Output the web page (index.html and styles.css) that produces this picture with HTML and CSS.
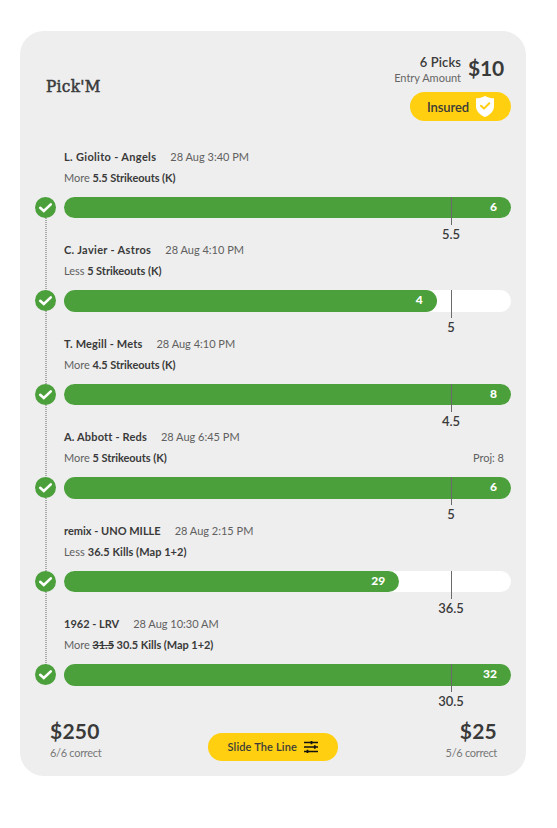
FILE: index.html
```html
<!DOCTYPE html>
<html lang="en">
<head>
<title>Pick'M</title>
<meta charset="utf-8">
<link rel="stylesheet" href="styles.css">
</head>
<body>
  <div class="card">
    <div class="header">
      <h1 class="title">Pick'M</h1>
      <div class="entry">
        <div class="entry-top">
          <div class="entry-text">
            <div class="picks">6 Picks</div>
            <div class="entry-label">Entry Amount</div>
          </div>
          <div class="amount">$10</div>
        </div>
        <div class="insured">
          <span>Insured</span>
          <svg width="18" height="21" viewBox="0 0 18 21">
            <path fill="#fff" d="M9 0C12 1.7 15 2.3 18 2.3V10C18 15.5 14 19 9 21C4 19 0 15.5 0 10V2.3C3 2.3 6 1.7 9 0Z"/>
            <path fill="none" stroke="#ffcf10" stroke-width="2" stroke-linecap="round" stroke-linejoin="round" d="M5 9.8L8 12.6L13.3 7.2"/>
          </svg>
        </div>
      </div>
    </div>

    <div class="picks-list">
      <div class="pick">
        <div class="check"><svg width="21" height="21" viewBox="0 0 21 21"><path d="M5.2 10.8L8.8 14L15.8 7.4"/></svg></div>
        <div class="info"><b class="name wide">L. Giolito - Angels</b><span class="date">28 Aug 3:40 PM</span></div>
        <div class="detail"><span>More <b>5.5 Strikeouts (K)</b></span></div>
        <div class="bar"><div class="fill" style="width:100%">6</div><div class="marker"><span>5.5</span></div></div>
      </div>
      <div class="pick">
        <div class="check"><svg width="21" height="21" viewBox="0 0 21 21"><path d="M5.2 10.8L8.8 14L15.8 7.4"/></svg></div>
        <div class="info"><b class="name wide">C. Javier - Astros</b><span class="date">28 Aug 4:10 PM</span></div>
        <div class="detail"><span>Less <b>5 Strikeouts (K)</b></span></div>
        <div class="bar"><div class="fill" style="width:83.4%">4</div><div class="marker"><span>5</span></div></div>
      </div>
      <div class="pick">
        <div class="check"><svg width="21" height="21" viewBox="0 0 21 21"><path d="M5.2 10.8L8.8 14L15.8 7.4"/></svg></div>
        <div class="info"><b class="name">T. Megill - Mets</b><span class="date">28 Aug 4:10 PM</span></div>
        <div class="detail"><span>More <b>4.5 Strikeouts (K)</b></span></div>
        <div class="bar"><div class="fill" style="width:100%">8</div><div class="marker"><span>4.5</span></div></div>
      </div>
      <div class="pick">
        <div class="check"><svg width="21" height="21" viewBox="0 0 21 21"><path d="M5.2 10.8L8.8 14L15.8 7.4"/></svg></div>
        <div class="info"><b class="name">A. Abbott - Reds</b><span class="date">28 Aug 6:45 PM</span></div>
        <div class="detail"><span>More <b>5 Strikeouts (K)</b></span><span class="proj">Proj: 8</span></div>
        <div class="bar"><div class="fill" style="width:100%">6</div><div class="marker"><span>5</span></div></div>
      </div>
      <div class="pick">
        <div class="check"><svg width="21" height="21" viewBox="0 0 21 21"><path d="M5.2 10.8L8.8 14L15.8 7.4"/></svg></div>
        <div class="info"><b class="name tight">remix - UNO MILLE</b><span class="date">28 Aug 2:15 PM</span></div>
        <div class="detail kills"><span>Less <b>36.5 Kills (Map 1+2)</b></span></div>
        <div class="bar"><div class="fill" style="width:75%">29</div><div class="marker"><span>36.5</span></div></div>
      </div>
      <div class="pick">
        <div class="check"><svg width="21" height="21" viewBox="0 0 21 21"><path d="M5.2 10.8L8.8 14L15.8 7.4"/></svg></div>
        <div class="info"><b class="name tight">1962 - LRV</b><span class="date">28 Aug 10:30 AM</span></div>
        <div class="detail"><span>More <b><s>31.5</s> 30.5 Kills (Map 1+2)</b></span></div>
        <div class="bar"><div class="fill" style="width:100%">32</div><div class="marker"><span>30.5</span></div></div>
      </div>
    </div>

    <div class="footer">
      <div class="prize">
        <div class="money">$250</div>
        <div class="correct">6/6 correct</div>
      </div>
      <button class="slide">
        <span>Slide The Line</span>
        <svg width="14" height="12" viewBox="0 0 14 12" stroke="#111" fill="none">
          <path stroke-width="1.6" d="M0 1.5H14M0 6H14M0 10.5H14"/>
          <path stroke-width="1.8" d="M7.5 0V3.2M10.8 4.2V7.8M3.5 8.8V12"/>
        </svg>
      </button>
      <div class="prize right">
        <div class="money">$25</div>
        <div class="correct">5/6 correct</div>
      </div>
    </div>
  </div>
</body>
</html>
```
FILE: styles.css
```css
*{
  margin: 0;
  padding: 0;
  box-sizing: border-box;
}
body{
  background: #fff;
  color: #3a3a3a;
  font-family: Lato, "Liberation Sans", sans-serif;
}
.card{
  width: 506px;
  height: 745px;
  margin: 31px 0 0 20px;
  border-radius: 24px;
  background: #eee;
}
.header{
  display: flex;
  justify-content: space-between;
  height: 114.9px;
  padding: 22px 15px 0 26px;
}
.title{
  font: 17px/24px "DejaVu Serif Condensed", "DejaVu Serif", serif;
  letter-spacing: .3px;
  -webkit-text-stroke: 0.5px #3a3a3a;
  padding-top: 21px;
}
.entry{
  display: flex;
  flex-direction: column;
  align-items: flex-end;
}
.entry-top{
  display: flex;
  gap: 7px;
  padding-right: 7px;
  height: 39px;
  text-align: right;
}
.picks{
  font-size: 13px;
  font-weight: 600;
  line-height: 18px;
  letter-spacing: .1px;
}
.entry-label{
  font-size: 11px;
  line-height: 14px;
  color: #666;
}
.amount{
  font-size: 21px;
  font-weight: bold;
  line-height: 30px;
  letter-spacing: -.2px;
}
.insured{
  display: flex;
  align-items: center;
  gap: 7px;
  width: 101px;
  height: 29px;
  padding-left: 17px;
  border-radius: 15px;
  background: #ffcf10;
  font-size: 13px;
  font-weight: 600;
  letter-spacing: -.1px;
}
.picks-list{
  padding: 0 15px 0 44px;
}
.pick{
  position: relative;
  height: 93.5px;
}
/* dotted line down to the next check */
.pick:not(:last-child)::after{
  content: "";
  position: absolute;
  left: -19px;
  top: 72px;
  width: 2px;
  height: 73px;
  background: repeating-linear-gradient(#aaa 0 1px, transparent 1px 2px);
}
.check{
  position: absolute;
  left: -29px;
  top: 51px;
  width: 21px;
  height: 21px;
  border-radius: 50%;
  background: #4ba03b;
}
.check svg{
  display: block;
}
.check path{
  fill: none;
  stroke: #fff;
  stroke-width: 2.6;
  stroke-linecap: round;
}
.info, .detail{
  display: flex;
  height: 21px;
  line-height: 21px;
  font-size: 11px;
  white-space: nowrap;
}
.info{
  gap: 14px;
}
.name{
  letter-spacing: .17px;
}
.name.wide{
  letter-spacing: .33px;
}
.name.tight{
  letter-spacing: 0;
}
.date, .detail{
  color: #606060;
}
.date{
  letter-spacing: 0;
}
.detail{
  justify-content: space-between;
  padding-right: 7px;
  margin-bottom: 9px;
  letter-spacing: -.05px;
}
.detail.kills{
  letter-spacing: .06px;
}
.detail b{
  color: #3a3a3a;
}
.proj{
  letter-spacing: 0;
}
.bar{
  position: relative;
  height: 21.5px;
  border-radius: 11px;
  background: #fff;
}
.fill{
  height: 100%;
  padding-right: 14px;
  border-radius: 11px;
  background: #4ba03b;
  color: #fff;
  font-size: 12px;
  font-weight: 900;
  line-height: 20px;
  text-align: right;
}
.marker{
  position: absolute;
  left: 387px;
  top: 0;
  width: 1px;
  height: 28px;
  background: #6b6b6b;
}
.marker span{
  position: absolute;
  top: 28px;
  left: -20px;
  width: 40px;
  font-size: 13px;
  font-weight: 600;
  line-height: 19px;
  text-align: center;
}
.footer{
  display: flex;
  justify-content: space-between;
  padding: 11px 29px 0 30px;
}
.prize{
  width: 70px;
}
.right{
  text-align: right;
}
.money{
  font-size: 21px;
  font-weight: bold;
  line-height: 26px;
  letter-spacing: .2px;
}
.correct{
  font-size: 11px;
  line-height: 18px;
  color: #777;
  letter-spacing: -.3px;
}
.slide{
  display: flex;
  align-items: center;
  gap: 7px;
  width: 130px;
  height: 28px;
  margin: 15px 2px 0 0;
  padding-left: 20px;
  border: 0;
  border-radius: 14px;
  background: #ffcf10;
  color: #3a3a3a;
  font: 600 11px Lato, sans-serif;
  letter-spacing: .15px;
}
```
